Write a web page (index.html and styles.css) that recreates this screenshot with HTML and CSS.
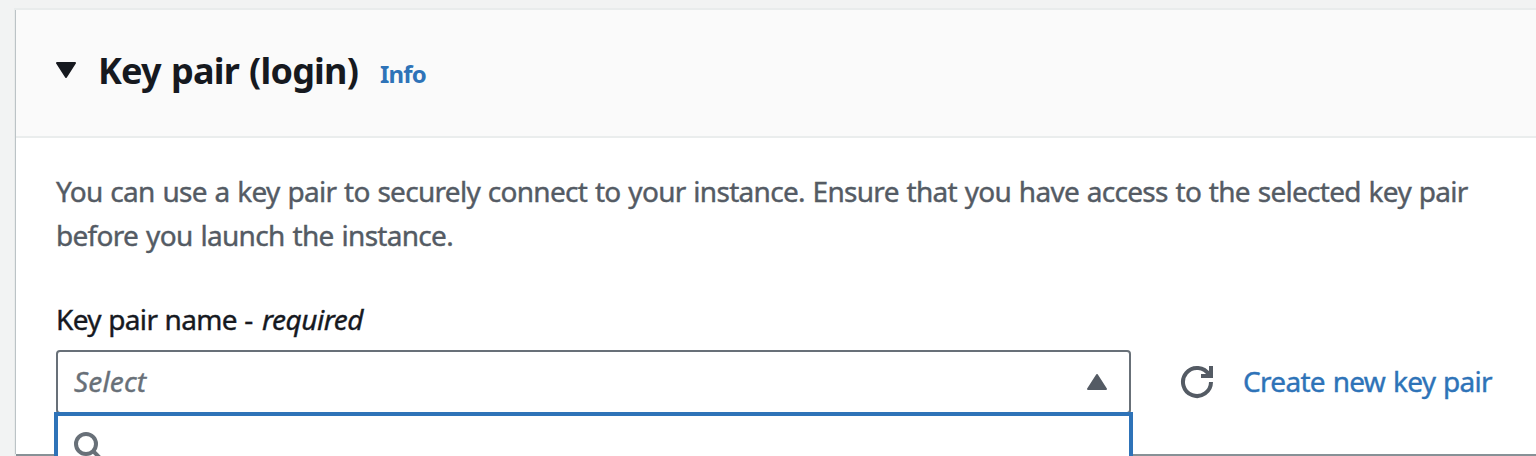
FILE: index.html
```html
<!DOCTYPE html>
<html lang="en">
<head>
<meta charset="utf-8">
<title>Key pair (login)</title>
<link rel="stylesheet" href="styles.css">
</head>
<body>
<section class="card">
  <header class="card-header">
    <svg class="caret" width="20" height="16" viewBox="0 0 20 16"><path d="M1 1H19L10 15Z" fill="#16191f" stroke="#16191f" stroke-width="2" stroke-linejoin="round"/></svg>
    <h2 class="title">Key pair (login)</h2>
    <a class="info">Info</a>
  </header>
  <div class="card-body">
    <p class="description"><span class="line line-first">You can use a key pair to securely connect to your instance. Ensure that you have access to the selected key pair</span> <span class="line line-second">before you launch the instance.</span></p>
    <label class="label"><span class="label-name">Key pair name -</span><em class="label-required">required</em></label>
    <div class="row">
      <div class="select">
        <span class="placeholder">Select</span>
        <svg class="select-caret" width="20" height="16" viewBox="0 0 20 16"><path d="M1 15H19L10 1Z" fill="#545b64" stroke="#545b64" stroke-width="2" stroke-linejoin="round"/></svg>
        <div class="dropdown">
          <svg class="search" width="32" height="26" viewBox="0 0 32 26" fill="none" stroke="#687078" stroke-width="4"><circle cx="14" cy="14" r="10"/><path d="M20.5 20.5L30 30"/></svg>
        </div>
      </div>
      <svg class="refresh" width="34" height="34" viewBox="0 0 34 34" fill="none" stroke="#545b64" stroke-width="4"><path d="M31 17A14 14 0 1 1 29.1 10"/><path d="M31 1V11H21"/></svg>
      <a class="create">Create new key pair</a>
    </div>
  </div>
</section>
</body>
</html>
```
FILE: styles.css
```css
* { box-sizing: border-box; }
body {
  margin: 0;
  height: 456px;
  padding: 10px 0 0 16px;
  overflow: hidden;
  background: #f2f3f3;
  color: #16191f;
  font-family: "Noto Sans", "Open Sans", sans-serif;
  font-size: 28px;
  line-height: 44px;
}
.card {
  height: 444px;
  background: #fff;
  box-shadow: -1px 0 0 #bcc3c6, 0 2px 0 #879196, 0 0 0 2px #e9ecec;
}
.card-header {
  display: flex;
  align-items: center;
  height: 128px;
  padding: 0 40px 8px;
  background: #fafafa;
  border-bottom: 2px solid #eaeded;
}
.caret { flex: none; margin-top: 2px; }
.title {
  width: 282px;
  margin: 3px 0 0 22px;
  font-size: 36px;
  font-weight: 700;
  letter-spacing: -0.8px;
  word-spacing: 1.6px;
  white-space: nowrap;
}
.info {
  margin-top: 10px;
  color: #2e73b8;
  font-size: 24px;
  font-weight: 700;
  letter-spacing: -0.8px;
}
.card-body {
  padding: 31px 40px 0;
  -webkit-text-stroke: 0.4px currentColor;
}
.description { margin: 0 0 40px; color: #545b64; }
.line { display: block; white-space: nowrap; }
.line-first { letter-spacing: -0.7px; word-spacing: 1.15px; }
.line-second { letter-spacing: -0.7px; word-spacing: 1.35px; }
.label { display: flex; height: 44px; margin-bottom: 9px; }
.label-name { width: 206px; letter-spacing: -0.62px; word-spacing: 0.5px; white-space: nowrap; }
.label-required { letter-spacing: -0.5px; }
.row { display: flex; align-items: center; height: 64px; }
.select {
  position: relative;
  display: flex;
  flex: none;
  align-items: center;
  justify-content: space-between;
  width: 1075px;
  height: 64px;
  padding: 0 22px 0 16px;
  border: 2px solid #687078;
  border-radius: 4px;
}
.placeholder {
  margin-bottom: 2px;
  color: #687078;
  font-style: italic;
  letter-spacing: 0.15px;
}
.dropdown {
  position: absolute;
  top: 60px;
  left: -4px;
  width: 1079px;
  height: 44px;
  padding: 14px 14px 0;
  background: #fff;
  border: 4px solid #2e73b8;
  border-bottom: 0;
}
.search { display: block; }
.refresh { flex: none; margin: 0 29px 0 49px; }
.create {
  margin-bottom: 2px;
  color: #2e73b8;
  letter-spacing: -0.7px;
  word-spacing: 1.2px;
  white-space: nowrap;
}
```
